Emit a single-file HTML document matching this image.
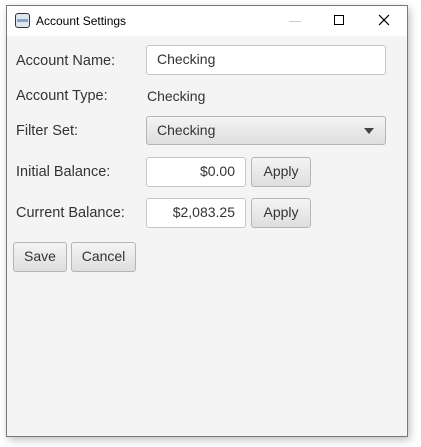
<!DOCTYPE html>
<html><head><style>
*{margin:0;padding:0;box-sizing:border-box}
body{width:421px;height:447px;background:#fff;position:relative;font-family:"Liberation Sans",sans-serif;font-size:14px;color:#333;overflow:hidden}
.win{position:absolute;left:6px;top:5px;width:402px;height:432px;border:1px solid #777;background:#f4f4f4;box-shadow:2px 3px 8px rgba(0,0,0,.25)}
.title{position:absolute;left:0;top:0;width:100%;height:30px;background:#fff;font-size:12px;color:#000}
.a{position:absolute}
.lbl{position:absolute;left:9px;font-size:14.5px}
.tf{position:absolute;background:#fff;border:1px solid #c6c6c6;border-radius:3px;padding:0 10px;line-height:27px}
.btn{position:absolute;background:linear-gradient(#f4f4f4,#dedede);border:1px solid #b5b5b5;border-radius:3px;text-align:center;line-height:27px}
</style></head><body>
<div class="win">
<div class="title">
<svg class="a" style="left:8px;top:7px" width="15" height="15" viewBox="0 0 15 15"><rect x="0.5" y="0.5" width="14" height="14" rx="2.5" fill="#dfe6f0" stroke="#333"/><rect x="2" y="6" width="11" height="3" fill="#8aa4c8"/></svg>
<span class="a" style="left:29px;top:8px">Account Settings</span>
<div class="a" style="left:282px;top:15px;width:12px;height:1px;background:#ccc"></div>
<div class="a" style="left:327px;top:9px;width:10px;height:10px;border:1px solid #000"></div>
<svg class="a" style="left:371px;top:8px" width="12" height="12"><path d="M1 1L11 11M11 1L1 11" stroke="#000" stroke-width="1.2"/></svg>
</div>
<div class="lbl" style="top:47px">Account Name:</div>
<div class="tf" style="left:139px;top:39px;width:240px;height:30px">Checking</div>
<div class="lbl" style="top:82px">Account Type:</div>
<div class="a" style="left:140px;top:82px">Checking</div>
<div class="lbl" style="top:117px">Filter Set:</div>
<div class="btn" style="left:139px;top:110px;width:240px;height:29px;text-align:left;padding-left:10px">Checking
<svg class="a" style="right:11px;top:11px" width="10" height="6"><path d="M0 0H10L5 6Z" fill="#444"/></svg></div>
<div class="lbl" style="top:158px">Initial Balance:</div>
<div class="tf" style="left:139px;top:151px;width:100px;height:30px;text-align:right">$0.00</div>
<div class="btn" style="left:244px;top:151px;width:60px;height:30px">Apply</div>
<div class="lbl" style="top:199px">Current Balance:</div>
<div class="tf" style="left:139px;top:192px;width:100px;height:30px;text-align:right">$2,083.25</div>
<div class="btn" style="left:244px;top:192px;width:60px;height:30px">Apply</div>
<div class="btn" style="left:6px;top:236px;width:54px;height:30px">Save</div>
<div class="btn" style="left:64px;top:236px;width:65px;height:30px">Cancel</div>
</div>
</body></html>
